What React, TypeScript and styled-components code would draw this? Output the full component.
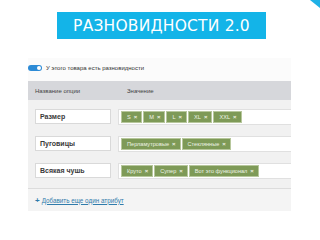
import styled, { createGlobalStyle } from "styled-components";

const GlobalStyle = createGlobalStyle`
  html, body {
    margin: 0;
    padding: 0;
    background: #fff;
  }
  body {
    font-family: "Liberation Sans", Arial, sans-serif;
  }
`

const Page = styled.div`
  position: relative;
  width: 320px;
  height: 240px;
  overflow: hidden;
  background: #fff;
  display: flex;
  flex-direction: column;
`
const Corner = styled.div`
  position: absolute;
  top: 0;
  right: 0;
  width: 0;
  height: 0;
  border-top: 8px solid #1fb1e6;
  border-left: 10px solid transparent;
`
const Banner = styled.h1`
  align-self: center;
  margin: 12px 0 0 3px;
  width: 209px;
  height: 27px;
  display: flex;
  align-items: center;
  justify-content: center;
  background: #13b4e8;
  color: #fff;
  font-family: "DejaVu Sans", sans-serif;
  font-weight: normal;
  font-size: 15.5px;
  letter-spacing: 0.2px;
`
const Panel = styled.div`
  margin: 19px 0 0 28px;
  width: 263px;
  background: #fbfbfb;
  display: flex;
  flex-direction: column;
`
const TopBar = styled.div`
  height: 20px;
  padding-bottom: 3px;
  display: flex;
  align-items: center;
  gap: 4px;
  font-size: 6px;
  color: #333;
`
const Toggle = styled.span`
  position: relative;
  width: 14px;
  height: 6px;
  border-radius: 3px;
  background: #2d8bd6;
  &::after {
    content: "";
    position: absolute;
    right: 1px;
    top: 1px;
    width: 4px;
    height: 4px;
    border-radius: 50%;
    background: #fff;
  }
`
const HeaderRow = styled.div`
  height: 19px;
  background: #d6d7db;
  display: grid;
  grid-template-columns: 92px 1fr;
  align-items: center;
  padding-left: 7px;
  font-size: 6px;
  color: #444;
`
const Body = styled.div`
  background: #f1f1f1;
  padding: 9px 0 10px 7px;
  display: flex;
  flex-direction: column;
  gap: 12px;
  border-bottom: 1px solid #dcdcdc;
`
const Row = styled.div`
  display: flex;
  align-items: center;
  gap: 7px;
  height: 15px;
`
const NameBox = styled.div`
  box-sizing: border-box;
  width: 76px;
  height: 15px;
  background: #fff;
  border: 1px solid #d9d9d9;
  display: flex;
  align-items: center;
  padding-left: 4px;
  font-size: 7px;
  font-weight: bold;
  color: #3a3a3a;
`
const ValueBox = styled.div`
  box-sizing: border-box;
  flex: 1;
  height: 16px;
  background: #fff;
  border: 1px solid #e0e0e0;
  border-right: none;
  display: flex;
  align-items: center;
  gap: 1px;
  padding-left: 2px;
`
const Tag = styled.span`
  box-sizing: border-box;
  height: 12px;
  display: flex;
  align-items: center;
  gap: 3px;
  padding: 0 4px 0 5px;
  background: #7e9a57;
  border: 1px solid #b7c79c;
  color: #eef3e6;
  font-size: 5.6px;
  white-space: nowrap;
  b {
    font-size: 6px;
  }
`
const Footer = styled.div`
  height: 22px;
  background: #f4f4f4;
  display: flex;
  align-items: center;
  gap: 2px;
  padding-left: 7px;
  color: #2f7bab;
  font-size: 6.3px;
`
const Plus = styled.span`
  font-weight: bold;
  font-size: 8px;
`
const AddLink = styled.a`
  color: inherit;
  text-decoration: underline;
`

const rows = [
  { name: "Размер", values: ["S", "M", "L", "XL", "XXL"] },
  { name: "Пуговицы", values: ["Перламутровые", "Стеклянные"] },
  { name: "Всякая чушь", values: ["Круто", "Супер", "Вот это функционал"] },
];

function App() {
  return (
    <Page>
      <GlobalStyle />
      <Corner />
      <Banner>РАЗНОВИДНОСТИ 2.0</Banner>
      <Panel>
        <TopBar>
          <Toggle />
          <span>У этого товара есть разновидности</span>
        </TopBar>
        <HeaderRow>
          <span>Название опции</span>
          <span>Значение</span>
        </HeaderRow>
        <Body>
          {rows.map((row) => (
            <Row key={row.name}>
              <NameBox>{row.name}</NameBox>
              <ValueBox>
                {row.values.map((v) => (
                  <Tag key={v}>
                    {v}
                    <b>×</b>
                  </Tag>
                ))}
              </ValueBox>
            </Row>
          ))}
        </Body>
        <Footer>
          <Plus>+</Plus>
          <AddLink>Добавить еще один атрибут</AddLink>
        </Footer>
      </Panel>
    </Page>
  );
}
export default App;
